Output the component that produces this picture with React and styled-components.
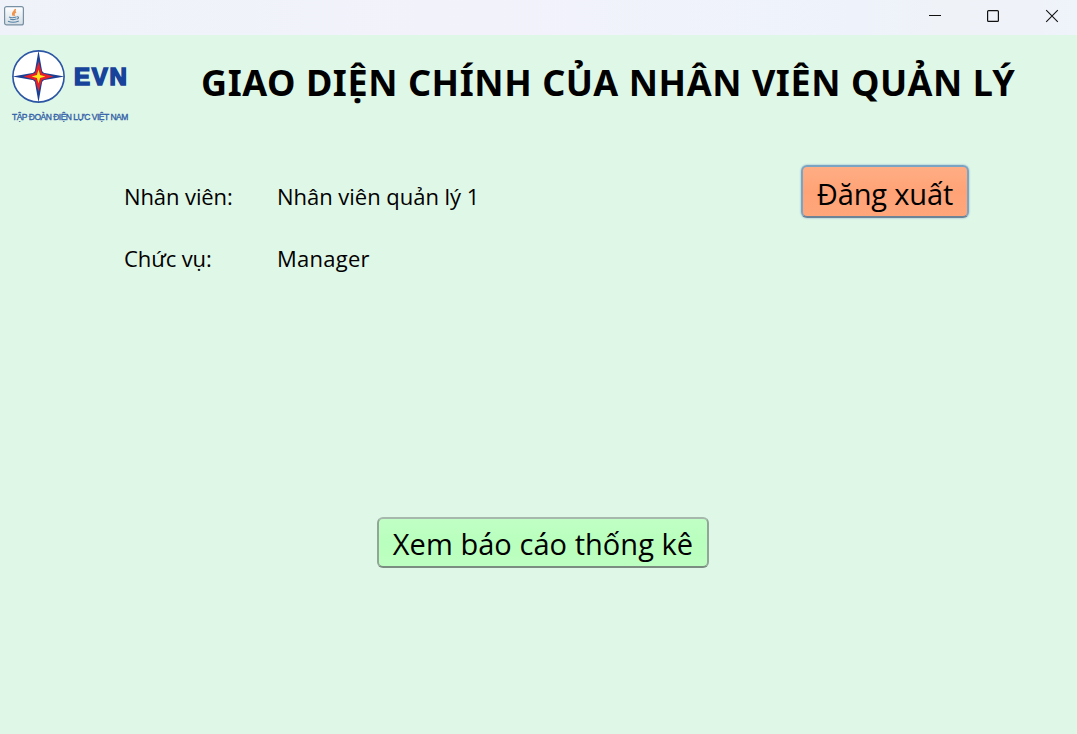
import React from "react";
import styled, { createGlobalStyle } from "styled-components";

const GlobalStyle = createGlobalStyle`
  * { box-sizing: border-box; }
  body { margin: 0; background: #dff7e6; }
`;

const Window = styled.div`
  display: flex;
  flex-direction: column;
  width: 1077px;
  height: 734px;
  overflow: hidden;
  background: #dff7e6;
  color: #000;
  font-family: "Noto Sans", "Open Sans", sans-serif;
`;

const TitleBar = styled.div`
  display: flex;
  justify-content: space-between;
  flex: none;
  height: 35px;
  background: linear-gradient(90deg, #eff3f9 0%, #f2f2fb 45%, #eef3fb 80%, #eff2f7 88%, #eff3fa 100%);
`;

const AppIcon = styled.svg`
  margin: 6px 0 0 4px;
  width: 20px;
  height: 20px;
`;

const Controls = styled.svg`
  width: 167px;
  height: 35px;
`;

const Header = styled.header`
  display: flex;
  flex: none;
  height: 115px;
`;

const Brand = styled.div`
  width: 190px;
  padding: 14px 0 0 11px;
  color: #17439b;
`;

const BrandRow = styled.div`
  display: flex;
  height: 56px;
`;

const BrandMark = styled.svg`
  width: 55px;
  height: 55px;
`;

const BrandName = styled.span`
  margin-left: 8px;
  font: 700 24px/55px "Liberation Sans", sans-serif;
  letter-spacing: 1.8px;
  -webkit-text-stroke: 1.6px #17439b;
`;

const BrandCaption = styled.div`
  margin: 6px 0 0 1px;
  font: 400 8.5px/12px "Liberation Sans", sans-serif;
  letter-spacing: -0.5px;
  -webkit-text-stroke: 0.35px #3563a8;
  white-space: nowrap;
  color: #3563a8;
`;

const Title = styled.h1`
  margin: 28px 0 0 11px;
  font-size: 36px;
  font-weight: 700;
  line-height: 40px;
  letter-spacing: 0.57px;
  white-space: nowrap;
`;

const Session = styled.section`
  display: flex;
  justify-content: space-between;
  flex: none;
  height: 367px;
  padding: 15px 108px 0 124px;
`;

const Details = styled.dl`
  display: grid;
  grid-template: 62px 62px / 153px 300px;
  margin: 0;
  font-family: "Open Sans", "Noto Sans", sans-serif;
  font-size: 22px;
  line-height: 62px;
  white-space: nowrap;
`;

const Label = styled.dt`
  letter-spacing: -0.1px;
`;

const Value = styled.dd`
  margin: 0;
  letter-spacing: ${(p) => p.$spacing}px;
`;

const Button = styled.button`
  display: flex;
  align-items: center;
  justify-content: center;
  flex: none;
  width: ${(p) => p.$width}px;
  height: ${(p) => p.$height}px;
  padding: ${(p) => p.$padTop}px 0 0;
  border: 2px solid;
  border-color: ${(p) => p.$border};
  border-radius: 6px;
  background: ${(p) => p.$fill};
  box-shadow: ${(p) => p.$shadow};
  color: #000;
  font: 400 29px/40px "Open Sans", "Noto Sans", sans-serif;
  letter-spacing: ${(p) => p.$spacing}px;
  white-space: nowrap;
`;

const Actions = styled.div`
  display: flex;
  padding-left: 377px;
`;

const MARK_ARM = "M0-26 L3.5-6 L0 0 L-3.5-6Z";

export default function App() {
  return (
    <Window>
      <GlobalStyle />
      <TitleBar>
        <AppIcon viewBox="0 0 20 20" fill="none">
          <defs>
            <linearGradient id="tile" x1="0" y1="0" x2="0" y2="1">
              <stop offset="0" stopColor="#ffffff" />
              <stop offset="1" stopColor="#d3dde5" />
            </linearGradient>
          </defs>
          <rect x=".6" y=".6" width="18.8" height="18.3" rx="2" fill="url(#tile)" stroke="#7890a3" strokeWidth="1.2" />
          <path d="M11.2 3C12 5.2 7.3 6 8.8 9.5M12 5.8C9.5 7 9.5 8 10.5 10" stroke="#f0944c" strokeWidth="1.7" />
          <path d="M5 11C7 12 10 11.7 12.3 11M6 13Q9 14.3 12 13M12.7 10.8Q15.5 10.5 14 12.6L12.5 13.3M4 15.2Q9 17.5 14.8 15" stroke="#5884a6" strokeWidth="1.1" />
        </AppIcon>
        <Controls viewBox="0 0 167 35" fill="none" stroke="#111">
          <path d="M19 15.5H31" />
          <rect x="77.6" y="10.6" width="10.8" height="10.8" rx="1" strokeWidth="1.2" />
          <path d="M136.2 10.2L147.8 21.8M147.8 10.2L136.2 21.8" strokeWidth="1.1" />
        </Controls>
      </TitleBar>

      <Header>
        <Brand>
          <BrandRow>
            <BrandMark viewBox="-27.5 -27.5 55 55">
              <circle r="25.6" fill="#fff" stroke="#2c56a5" strokeWidth="1.6" />
              {[0, 90, 180, 270].map((angle) => (
                <path key={angle} d={MARK_ARM} transform={`rotate(${angle})`} fill="#1b3f93" />
              ))}
              <path d="M0-10L4.4-4.4L10 0L4.4 4.4L0 10L-4.4 4.4L-10 0L-4.4-4.4Z" fill="#1b3f93" />
              <path d="M0-15L3.4-3.4L15 0L3.4 3.4L0 15L-3.4 3.4L-15 0L-3.4-3.4Z" fill="#e8202a" />
              <path d="M0-7L1.6-1.6L7 0L1.6 1.6L0 7L-1.6 1.6L-7 0L-1.6-1.6Z" fill="#ffe71a" />
            </BrandMark>
            <BrandName>EVN</BrandName>
          </BrandRow>
          <BrandCaption>TẬP ĐOÀN ĐIỆN LỰC VIỆT NAM</BrandCaption>
        </Brand>
        <Title>GIAO DIỆN CHÍNH CỦA NHÂN VIÊN QUẢN LÝ</Title>
      </Header>

      <Session>
        <Details>
          <Label>Nhân viên:</Label>
          <Value $spacing={-0.03}>Nhân viên quản lý 1</Value>
          <Label>Chức vụ:</Label>
          <Value $spacing={0.25}>Manager</Value>
        </Details>
        <Button
          $width={168}
          $height={53}
          $padTop={5}
          $spacing={-0.15}
          $fill="linear-gradient(#ffad84, #ffa377 50%, #ffa67b)"
          $border="#7ba3c2 #7ba3c2 #6d8496"
          $shadow="0 0 2px #73a4d1"
        >
          Đăng xuất
        </Button>
      </Session>

      <Actions>
        <Button
          $width={332}
          $height={51}
          $padTop={3}
          $spacing={0.05}
          $fill="linear-gradient(#c0ffc5, #b9ffbd 50%, #bdffc1)"
          $border="#a5b8ab #92a597 #7b8d80"
          $shadow="none"
        >
          Xem báo cáo thống kê
        </Button>
      </Actions>
    </Window>
  );
}
